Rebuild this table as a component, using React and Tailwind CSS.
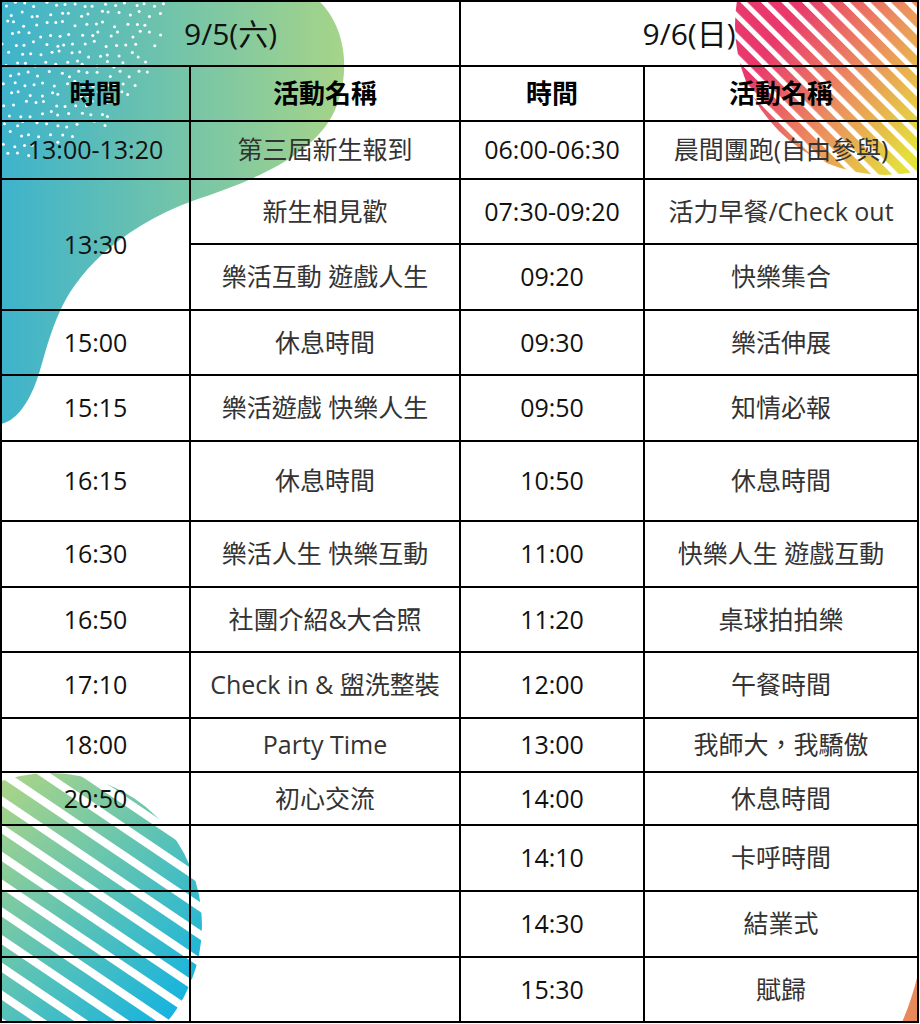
import React from 'react';

const rows = [
  ['13:00-13:20', '第三屆新生報到', '06:00-06:30', '晨間團跑(自由參與)'],
  ['13:30', '新生相見歡', '07:30-09:20', '活力早餐/Check out'],
  [null, '樂活互動 遊戲人生', '09:20', '快樂集合'],
  ['15:00', '休息時間', '09:30', '樂活伸展'],
  ['15:15', '樂活遊戲 快樂人生', '09:50', '知情必報'],
  ['16:15', '休息時間', '10:50', '休息時間'],
  ['16:30', '樂活人生 快樂互動', '11:00', '快樂人生 遊戲互動'],
  ['16:50', '社團介紹&大合照', '11:20', '桌球拍拍樂'],
  ['17:10', 'Check in & 盥洗整裝', '12:00', '午餐時間'],
  ['18:00', 'Party Time', '13:00', '我師大，我驕傲'],
  ['20:50', '初心交流', '14:00', '休息時間'],
  ['', '', '14:10', '卡呼時間'],
  ['', '', '14:30', '結業式'],
  ['', '', '15:30', '賦歸'],
];

// pseudo random so the dots stay put between renders
const rnd = (i) => {
  const v = Math.sin(i * 12.9898 + 78.233) * 43758.5453;
  return v - Math.floor(v);
};

const dots = [];
let k = 0;
for (let y = 4; y < 175; y += 10) {
  for (let x = 3; x < 180; x += 10) {
    k += 1;
    const dx = x + (rnd(k) - 0.5) * 6 + ((y / 10) % 2) * 5;
    const dy = y + (rnd(k + 500) - 0.5) * 6;
    const f = (dx / 168) ** 2 + (dy / 162) ** 2;
    if (f < 0.8 + rnd(k + 900) * 0.25) dots.push([dx, dy]);
  }
}

const Backdrop = () => (
  <svg className="absolute left-0 top-0" width="920" height="1024" viewBox="0 0 920 1024">
    <defs>
      <clipPath id="inside">
        <rect x="0" y="0" width="918" height="1022" />
      </clipPath>
      <linearGradient id="gBlob" gradientUnits="userSpaceOnUse" x1="0" y1="0" x2="345" y2="0">
        <stop offset="0" stopColor="#3db3cc" />
        <stop offset="1" stopColor="#a6d489" />
      </linearGradient>
      <linearGradient id="gTR" gradientUnits="userSpaceOnUse" x1="760" y1="60" x2="910" y2="160">
        <stop offset="0" stopColor="#e8386c" />
        <stop offset="0.5" stopColor="#eb8e5e" />
        <stop offset="1" stopColor="#e3e23a" />
      </linearGradient>
      <linearGradient id="gBL" gradientUnits="userSpaceOnUse" x1="0" y1="800" x2="200" y2="990">
        <stop offset="0" stopColor="#a5d38a" />
        <stop offset="1" stopColor="#14b3e0" />
      </linearGradient>
      <pattern id="stTR" patternUnits="userSpaceOnUse" width="40" height="14.5" patternTransform="rotate(45)">
        <rect width="40" height="9.5" fill="white" />
      </pattern>
      <pattern id="stBL" patternUnits="userSpaceOnUse" width="40" height="23" patternTransform="rotate(34)">
        <rect width="40" height="15" fill="white" />
      </pattern>
      <mask id="mTR" maskUnits="userSpaceOnUse" x="0" y="0" width="920" height="1024">
        <rect width="920" height="1024" fill="url(#stTR)" />
      </mask>
      <mask id="mBL" maskUnits="userSpaceOnUse" x="0" y="0" width="920" height="1024">
        <rect width="920" height="1024" fill="url(#stBL)" />
      </mask>
    </defs>
    <g clipPath="url(#inside)">
      <path
        d="M0,0 H318 C345,25 352,70 335,110 C315,155 255,180 195,200 C140,220 100,250 75,285 C50,320 45,360 35,385 C27,405 15,422 0,424 Z"
        fill="url(#gBlob)"
      />
      {dots.map(([x, y], i) => (
        <circle key={i} cx={x} cy={y} r="1.5" fill="#ffffff" />
      ))}
      <circle cx="885" cy="25" r="150" fill="url(#gTR)" mask="url(#mTR)" />
      <circle cx="50" cy="925" r="152" fill="url(#gBL)" mask="url(#mBL)" />
      <path d="M920,966 Q912,1000 902,1022 L920,1022 Z" fill="#e8895b" />
    </g>
  </svg>
);

const Cell = ({ children, className = '' }) => (
  <div className={`flex items-center justify-center border-r-2 border-b-2 border-black text-center whitespace-nowrap ${className}`}>
    {children}
  </div>
);

const Time = ({ children, className = '' }) => (
  <Cell className={`text-[25px] text-[#111] ${className}`}>{children}</Cell>
);

const Act = ({ children }) => <Cell className="text-[25px] text-[#333]">{children}</Cell>;

export default function App() {
  return (
    <div className="relative w-[920px] h-[1024px] overflow-hidden bg-white font-['Open_Sans','Noto_Sans_CJK_TC',sans-serif]">
      <Backdrop />
      <div className="relative grid w-[919px] grid-cols-[189px_270px_184px_274px] grid-rows-[65px_55px_58px_65px_66px_65px_66px_80px_66px_65px_66px_54px_53px_66px_66px_65px] border-t-2 border-l-2 border-black">
        <Cell className="col-span-2 text-[30px] font-normal text-[#111]">9/5(六)</Cell>
        <Cell className="col-span-2 text-[30px] font-normal text-[#111]">9/6(日)</Cell>

        <Cell className="text-[26px] font-bold text-black">時間</Cell>
        <Cell className="text-[26px] font-bold text-black">活動名稱</Cell>
        <Cell className="text-[26px] font-bold text-black">時間</Cell>
        <Cell className="text-[26px] font-bold text-black">活動名稱</Cell>

        {rows.map(([t1, a1, t2, a2], i) => (
          <React.Fragment key={i}>
            {t1 !== null && <Time className={i === 1 ? 'row-span-2' : ''}>{t1}</Time>}
            <Act>{a1}</Act>
            <Time>{t2}</Time>
            <Act>{a2}</Act>
          </React.Fragment>
        ))}
      </div>
    </div>
  );
}
